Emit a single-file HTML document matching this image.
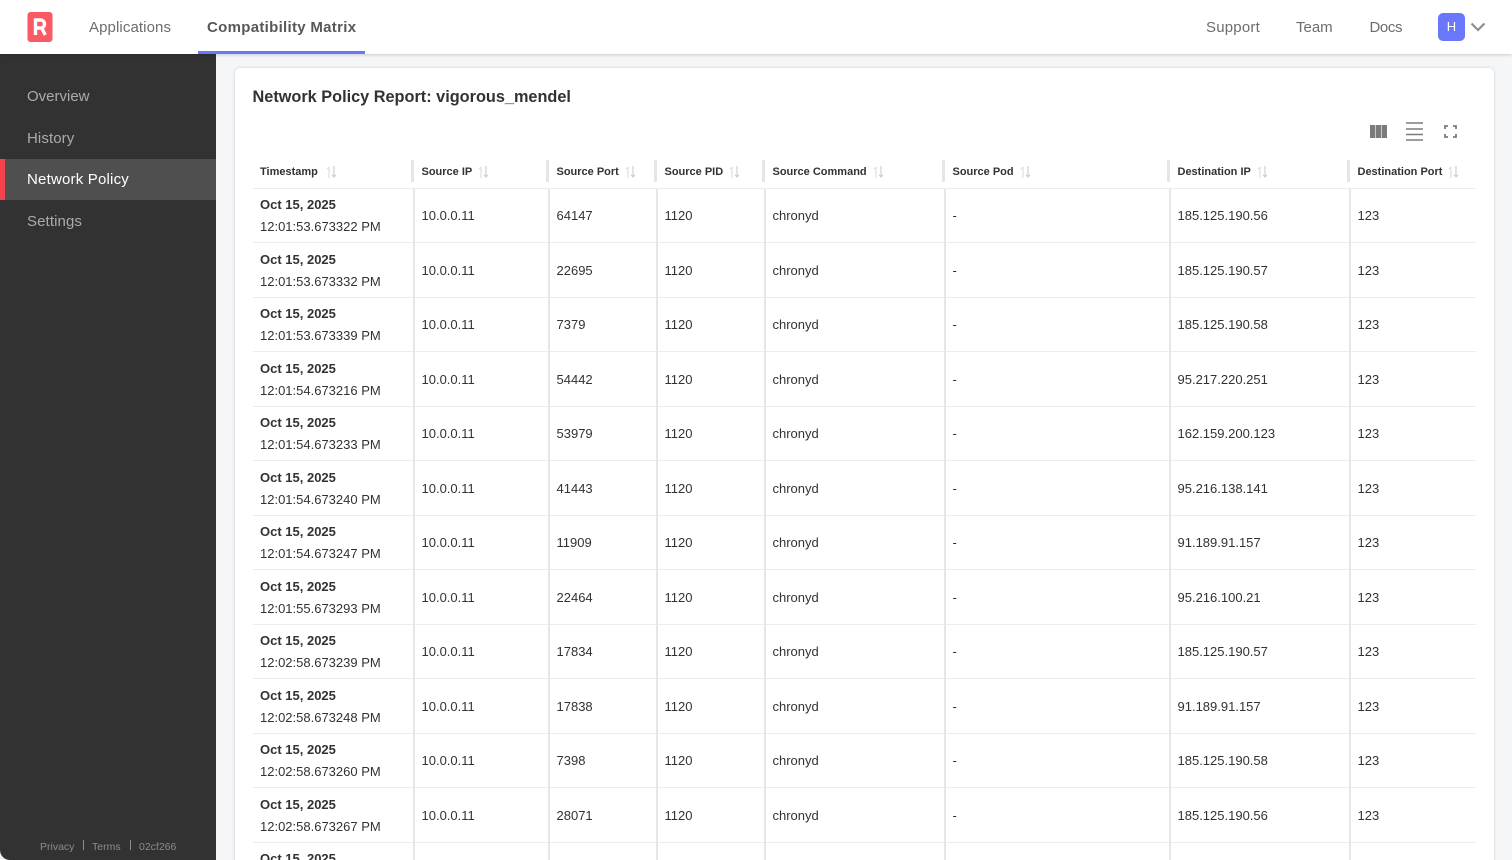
<!DOCTYPE html>
<html lang="en"><head><meta charset="utf-8"><title>Network Policy Report</title>
<style>
*{box-sizing:border-box}
html,body{margin:0;padding:0;width:1512px;height:860px;overflow:hidden;background:#f5f6f8;font-family:"Liberation Sans",sans-serif}
#wrap{position:relative;width:1512px;height:860px;overflow:hidden;background:#f5f6f8}
.a{position:absolute;white-space:nowrap}
#top{position:absolute;left:0;top:0;width:1512px;height:54px;background:#fff;box-shadow:0 1px 3px rgba(0,0,0,.18);z-index:3}
.nav{position:absolute;top:18px;font-size:15px;line-height:20px;color:#6d6d6d;white-space:nowrap}
#side{position:absolute;left:0;top:54px;width:216px;height:806px;background:#323232;border-radius:0 0 0 10px;z-index:1}
.si{position:absolute;left:27px;font-size:15px;line-height:20px;color:#a7adab;white-space:nowrap}
.ft{position:absolute;top:786px;font-size:10.5px;line-height:14px;color:#8c8c8c;white-space:nowrap}
#card{position:absolute;left:235px;top:68px;width:1258.500px;height:830px;background:#fff;border-radius:5px;box-shadow:0 0 3px rgba(0,0,0,.16)}
table{position:absolute;left:18px;top:90px;width:1223px;border-collapse:collapse;table-layout:fixed;font-size:13px;color:#323232}
th{height:30px;text-align:left;font-size:11px;font-weight:bold;color:#323232;padding:0 0 2px 8.500px;border-bottom:1px solid #ececec;position:relative;white-space:nowrap}
th:first-child,td:first-child{padding-left:7px}
th+th::before{content:"";position:absolute;left:-2px;top:2px;width:3px;height:22px;background:#e6e6e6;border-radius:1px}
td{height:54.500px;padding:2px 0 0 8.500px;border-bottom:1px solid #ececec;line-height:22px;vertical-align:middle;white-space:nowrap;position:relative}
td+td::before{content:"";position:absolute;left:0;top:0;bottom:-1px;width:1.500px;background:#e6e6e6}
b{font-weight:bold;color:#323232}
th svg{margin-left:6px;vertical-align:-3px}
th:first-child svg{margin-left:8px}
</style></head><body>
<svg width="0" height="0" style="position:absolute"><defs><symbol id="s" viewBox="0 0 11 12"><path d="M3 12V1M1 3.200 3 1" stroke="#dedede" stroke-width="1.200" fill="none"/><path d="M8 0v11M6 8.800 8 11l2-2.200" stroke="#cfcfcf" stroke-width="1.200" fill="none"/></symbol></defs></svg>
<div id="wrap">
<div id="top">
<svg class="a" style="left:27px;top:12px" width="26" height="30" viewBox="0 0 26 30"><rect x="0.500" width="25" height="30" rx="3" fill="#f95a66"/><path d="M8.500 23V8h5a4.100 4.100 0 0 1 1.200 8L18.300 23M8.500 16h5" stroke="#fff" stroke-width="3.400" fill="none"/></svg>
<div class="nav" style="left:89px;letter-spacing:.1px">Applications</div>
<div class="nav" style="left:207px;font-weight:bold;color:#585858;letter-spacing:.3px">Compatibility Matrix</div>
<div class="a" style="left:198px;top:51px;width:167px;height:3px;background:#6a77fb"></div>
<div class="nav" style="left:1206px;letter-spacing:.2px">Support</div>
<div class="nav" style="left:1296px">Team</div>
<div class="nav" style="left:1369.500px;letter-spacing:-.4px">Docs</div>
<div class="a" style="left:1438px;top:13px;width:27px;height:28px;border-radius:5px;background:#6a77fb;color:#fff;font-size:13px;line-height:28px;text-align:center">H</div>
<svg class="a" style="left:1470px;top:22px" width="16" height="10" viewBox="0 0 16 10"><path d="M1.500 1.500 8 8l6.500-6.500" stroke="#8f8f8f" stroke-width="2.200" fill="none"/></svg>
</div>
<div id="side">
<div class="si" style="top:33px">Overview</div>
<div class="si" style="top:75px;letter-spacing:.1px">History</div>
<div class="a" style="left:0;top:104.500px;width:216px;height:41.500px;background:#4f4f4f"></div>
<div class="a" style="left:0;top:104.500px;width:5px;height:41.500px;background:#f4424f"></div>
<div class="si" style="top:116px;color:#fff;letter-spacing:.2px">Network Policy</div>
<div class="si" style="top:158px;letter-spacing:.1px">Settings</div>
<div class="ft" style="left:40px">Privacy</div>
<div class="a" style="left:83px;top:786px;width:1px;height:10px;background:#8c8c8c"></div>
<div class="ft" style="left:92px">Terms</div>
<div class="a" style="left:130px;top:786px;width:1px;height:10px;background:#8c8c8c"></div>
<div class="ft" style="left:139px">02cf266</div>
</div>
<div id="card">
<div class="a" style="left:17.500px;top:18px;font-size:16.300px;line-height:22px;font-weight:bold;color:#323232">Network Policy Report: vigorous_mendel</div>
<svg class="a" style="left:1135px;top:57px" width="17" height="13" viewBox="0 0 17 13"><path d="M0 0h5.300v13H0zM5.900 0h5.200v13H5.900zM11.700 0H17v13h-5.300z" fill="#7b7b7b"/></svg>
<svg class="a" style="left:1171px;top:54px" width="17" height="19" viewBox="0 0 17 19"><path d="M0 1h17M0 7h17M0 12.500h17M0 18h17" stroke="#7b7b7b" stroke-width="1.600" fill="none"/></svg>
<svg class="a" style="left:1209px;top:57px" width="13" height="13" viewBox="0 0 13 13"><path d="M1 4V1h3M9 1h3v3M12 9v3H9M4 12H1V9" stroke="#7b7b7b" stroke-width="1.800" fill="none"/></svg>
<table>
<colgroup><col style="width:160px"><col style="width:135px"><col style="width:108px"><col style="width:108px"><col style="width:180px"><col style="width:225px"><col style="width:180px"><col style="width:127px"></colgroup>
<thead><tr><th>Timestamp<svg width="11" height="12"><use href="#s"/></svg></th><th>Source IP<svg width="11" height="12"><use href="#s"/></svg></th><th>Source Port<svg width="11" height="12"><use href="#s"/></svg></th><th>Source PID<svg width="11" height="12"><use href="#s"/></svg></th><th>Source Command<svg width="11" height="12"><use href="#s"/></svg></th><th>Source Pod<svg width="11" height="12"><use href="#s"/></svg></th><th>Destination IP<svg width="11" height="12"><use href="#s"/></svg></th><th>Destination Port<svg width="11" height="12"><use href="#s"/></svg></th></tr></thead>
<tbody>
<tr><td><b>Oct 15, 2025</b><br>12:01:53.673322 PM</td><td>10.0.0.11</td><td>64147</td><td>1120</td><td>chronyd</td><td>-</td><td>185.125.190.56</td><td>123</td></tr>
<tr><td><b>Oct 15, 2025</b><br>12:01:53.673332 PM</td><td>10.0.0.11</td><td>22695</td><td>1120</td><td>chronyd</td><td>-</td><td>185.125.190.57</td><td>123</td></tr>
<tr><td><b>Oct 15, 2025</b><br>12:01:53.673339 PM</td><td>10.0.0.11</td><td>7379</td><td>1120</td><td>chronyd</td><td>-</td><td>185.125.190.58</td><td>123</td></tr>
<tr><td><b>Oct 15, 2025</b><br>12:01:54.673216 PM</td><td>10.0.0.11</td><td>54442</td><td>1120</td><td>chronyd</td><td>-</td><td>95.217.220.251</td><td>123</td></tr>
<tr><td><b>Oct 15, 2025</b><br>12:01:54.673233 PM</td><td>10.0.0.11</td><td>53979</td><td>1120</td><td>chronyd</td><td>-</td><td>162.159.200.123</td><td>123</td></tr>
<tr><td><b>Oct 15, 2025</b><br>12:01:54.673240 PM</td><td>10.0.0.11</td><td>41443</td><td>1120</td><td>chronyd</td><td>-</td><td>95.216.138.141</td><td>123</td></tr>
<tr><td><b>Oct 15, 2025</b><br>12:01:54.673247 PM</td><td>10.0.0.11</td><td>11909</td><td>1120</td><td>chronyd</td><td>-</td><td>91.189.91.157</td><td>123</td></tr>
<tr><td><b>Oct 15, 2025</b><br>12:01:55.673293 PM</td><td>10.0.0.11</td><td>22464</td><td>1120</td><td>chronyd</td><td>-</td><td>95.216.100.21</td><td>123</td></tr>
<tr><td><b>Oct 15, 2025</b><br>12:02:58.673239 PM</td><td>10.0.0.11</td><td>17834</td><td>1120</td><td>chronyd</td><td>-</td><td>185.125.190.57</td><td>123</td></tr>
<tr><td><b>Oct 15, 2025</b><br>12:02:58.673248 PM</td><td>10.0.0.11</td><td>17838</td><td>1120</td><td>chronyd</td><td>-</td><td>91.189.91.157</td><td>123</td></tr>
<tr><td><b>Oct 15, 2025</b><br>12:02:58.673260 PM</td><td>10.0.0.11</td><td>7398</td><td>1120</td><td>chronyd</td><td>-</td><td>185.125.190.58</td><td>123</td></tr>
<tr><td><b>Oct 15, 2025</b><br>12:02:58.673267 PM</td><td>10.0.0.11</td><td>28071</td><td>1120</td><td>chronyd</td><td>-</td><td>185.125.190.56</td><td>123</td></tr>
<tr><td><b>Oct 15, 2025</b><br>12:02:58.673270 PM</td><td></td><td></td><td></td><td></td><td></td><td></td><td></td></tr>
</tbody></table>
</div>
</div>
</body></html>
